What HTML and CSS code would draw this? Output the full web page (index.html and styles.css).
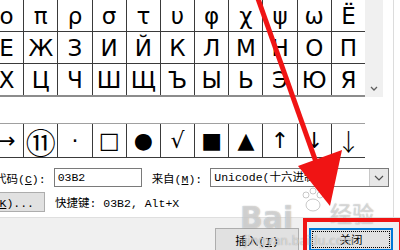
FILE: index.html
```html
<!DOCTYPE html>
<html lang="zh-CN">
<head>
    <meta charset="UTF-8">
    <title>符号</title>
    <link rel="stylesheet" href="styles.css">
</head>
<body>

<div class="dialog">
    <div class="panel">
        <div class="top">
            <div class="grid chars">
                <span>ο</span><span>π</span><span>ρ</span><span>σ</span><span>τ</span><span>υ</span><span>φ</span><span>χ</span><span>ψ</span><span>ω</span><span>Ё</span>
                <span>Е</span><span>Ж</span><span>З</span><span>И</span><span>Й</span><span>К</span><span>Л</span><span>М</span><span>Н</span><span>О</span><span>П</span>
                <span>Х</span><span>Ц</span><span>Ч</span><span>Ш</span><span>Щ</span><span>Ъ</span><span>Ы</span><span>Ь</span><span>Э</span><span>Ю</span><span>Я</span>
            </div>
            <div class="scrollbar">
                <svg width="18" height="10" viewBox="0 0 18 10"><polyline points="6,3 9,6 12,3" fill="none" stroke="#606060" stroke-width="1.3"/></svg>
            </div>
        </div>

        <div class="grid recent">
            <span>→</span><span class="circled">⑪</span><span>·</span><span>□</span><span>●</span><span>√</span><span>■</span><span>▲</span><span>↑</span><span>↓</span><span class="thin">↓</span>
        </div>

        <div class="row code-row">
            <label class="lbl code-lbl">字符代码(<u>C</u>):</label>
            <div class="textbox">03B2</div>
            <label class="lbl from-lbl">来自(<u>M</u>):</label>
            <div class="select">
                <span class="select-text">Unicode(十六进制)</span>
                <span class="select-btn">
                    <svg width="10" height="6" viewBox="0 0 10 6"><polyline points="1,1 5,5 9,1" fill="none" stroke="#505050" stroke-width="1.2"/></svg>
                </span>
            </div>
        </div>

        <div class="row key-row">
            <button class="btn key-btn">快捷键(<u>K</u>)...</button>
            <span class="lbl shortcut">快捷键: 03B2, Alt+X</span>
        </div>
    </div>

    <div class="footer">
        <button class="btn">插入(<u>I</u>)</button>
        <button class="btn default"><span class="focus">关闭</span></button>
    </div>

    <div class="watermark">
        <span class="wm-bai">Bai</span>
        <svg class="wm-paw" width="26" height="28" viewBox="0 0 26 28">
            <circle cx="6" cy="9" r="3" />
            <circle cx="13" cy="5" r="3" />
            <circle cx="20" cy="9" r="3" />
            <ellipse cx="13" cy="19" rx="7" ry="6" />
        </svg>
        <span class="wm-jy">经验</span>
        <span class="wm-url">jingyan.baidu.com</span>
    </div>

    <div class="red-box"></div>

    <svg class="red-arrow" width="400" height="250" viewBox="0 0 400 250">
        <line x1="257" y1="-4" x2="316" y2="162" stroke="#f01414" stroke-width="5"/>
        <polygon points="298,166 342,150 330,206" fill="#f01414"/>
    </svg>
</div>

</body>
</html>
```

FILE: styles.css
```css
body {
    margin: 0;
    width: 400px;
    height: 250px;
    overflow: hidden;
    background: #fff;
}

.dialog {
    position: relative;
    width: 400px;
    height: 250px;
    overflow: hidden;
    font-family: 'Liberation Mono', 'Noto Sans CJK SC', monospace;
    font-size: 11.5px;
    color: #000;
}

.panel {
    width: 393px;
    height: 217px;
    border-right: 1px solid #dcdcdc;
}

.top {
    display: flex;
    height: 97px;
}

.grid {
    display: grid;
    grid-template-columns: repeat(11, 1fr);
    gap: 1px;
    width: 375px;
    margin-left: -10px;
    background: #3a3a3a;
    font-family: 'DejaVu Sans', 'Noto Sans CJK SC', sans-serif;
}

.grid span {
    display: flex;
    align-items: center;
    justify-content: center;
    background: #fff;
}

.chars {
    grid-template-rows: 31px 31px 31px;
    border-bottom: 2px solid #8c8c8c;
    font-size: 23px;
}

.scrollbar {
    width: 18px;
    height: 97px;
    background: #f0f0f0;
    display: flex;
    align-items: flex-end;
    padding-bottom: 3px;
    box-sizing: border-box;
}

.recent {
    margin-top: 26px;
    grid-template-rows: 33px;
    border-top: 1px solid #a0a0a0;
    border-bottom: 1px solid #3a3a3a;
    font-size: 22px;
}

.recent .circled {
    font-family: 'Noto Sans CJK SC', sans-serif;
    font-size: 30px;
}

.recent .thin {
    font-family: 'Noto Sans CJK SC', sans-serif;
    font-weight: 300;
    font-size: 24px;
}

.row {
    display: flex;
    align-items: center;
}

.code-row {
    margin-top: 10px;
    height: 19px;
}

.lbl {
    white-space: nowrap;
}

.code-lbl {
    margin-left: -28px;
}

.textbox {
    width: 88px;
    height: 19px;
    margin-left: 8px;
    box-sizing: border-box;
    border: 1px solid #7a7a7a;
    padding-left: 3px;
    line-height: 17px;
}

.from-lbl {
    margin-left: 10px;
}

.select {
    display: flex;
    width: 179px;
    height: 19px;
    margin-left: 8px;
    box-sizing: border-box;
    border: 1px solid #7a7a7a;
}

.select-text {
    flex: 1;
    padding-left: 3px;
    line-height: 17px;
    white-space: nowrap;
    overflow: hidden;
}

.select-btn {
    width: 18px;
    display: flex;
    align-items: center;
    justify-content: center;
    background: #e8e8e8;
    border-left: 1px solid #c8c8c8;
}

.key-row {
    margin-top: 5px;
    height: 20px;
}

.btn {
    font-family: inherit;
    font-size: inherit;
    color: #000;
    background: #e1e1e1;
    border: 1px solid #adadad;
    padding: 0;
    height: 23px;
}

.key-btn {
    width: 100px;
    height: 20px;
    margin-left: -55px;
    text-align: right;
    padding-right: 10px;
    white-space: nowrap;
}

.shortcut {
    margin-left: 10px;
}

.footer {
    display: flex;
    justify-content: flex-end;
    gap: 10px;
    height: 33px;
    padding: 10px 7px 0 0;
    box-sizing: border-box;
    background: #f0f0f0;
    border-top: 1px solid #dfdfdf;
}

.footer .btn {
    width: 84px;
}

.footer .default {
    border: 2px solid #0078d7;
    padding: 1px;
}

.focus {
    display: block;
    height: 100%;
    line-height: 17px;
    border: 1px dotted #000;
    box-sizing: border-box;
}

.watermark {
    position: absolute;
    left: 238px;
    top: 194px;
    width: 162px;
    height: 56px;
    color: rgba(255, 255, 255, 0.55);
    font-family: 'DejaVu Sans', 'Noto Sans CJK SC', sans-serif;
    text-shadow: 0 0 1px rgba(110, 110, 110, 0.7);
}

.wm-bai {
    position: absolute;
    left: 2px;
    top: 6px;
    font-size: 30px;
    font-weight: bold;
}

.wm-paw {
    position: absolute;
    left: 62px;
    top: -8px;
    fill: rgba(255, 255, 255, 0.5);
    stroke: rgba(120, 120, 120, 0.5);
    stroke-width: 0.8;
}

.wm-jy {
    position: absolute;
    left: 92px;
    top: 2px;
    font-size: 22px;
    font-family: 'Noto Sans CJK SC', sans-serif;
}

.wm-url {
    position: absolute;
    left: 6px;
    top: 40px;
    font-size: 12px;
}

.red-box {
    position: absolute;
    left: 303px;
    top: 218px;
    width: 100px;
    height: 40px;
    border: 4px solid #f01414;
    box-sizing: border-box;
}

.red-arrow {
    position: absolute;
    left: 0;
    top: 0;
}
```
